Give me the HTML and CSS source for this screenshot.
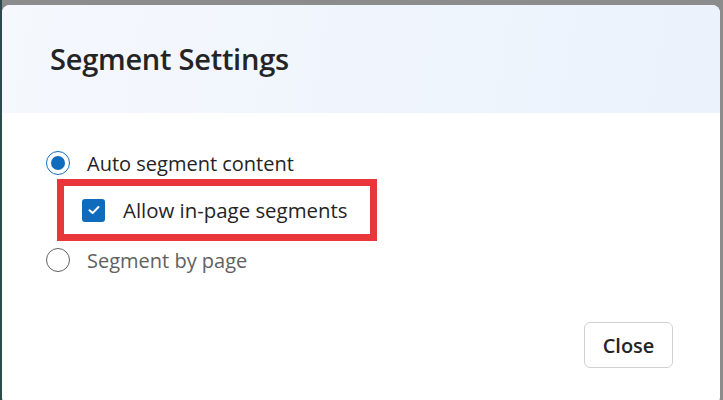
FILE: index.html
```html
<!DOCTYPE html>
<html lang="en">
<head>
    <meta charset="UTF-8">
    <meta name="viewport" content="width=device-width, initial-scale=1.0">
    <title>Segment Settings</title>
    <link rel="stylesheet" href="styles.css">
</head>
<body>
    <div class="backdrop">
        <div class="dialog">
            <div class="dialog-header">
                <h2>Segment Settings</h2>
            </div>

            <div class="dialog-body">
                <label class="option">
                    <span class="radio checked"></span>
                    <span class="option-text">Auto segment content</span>
                </label>

                <!-- highlighted sub option -->
                <div class="highlight">
                    <label class="option sub">
                        <span class="checkbox">
                            <svg width="12" height="10" viewBox="0 0 12 10">
                                <path d="M1.5 5.2 L4.6 8 L10.5 2" fill="none" stroke="#fff" stroke-width="2" stroke-linecap="round" stroke-linejoin="round"/>
                            </svg>
                        </span>
                        <span class="option-text">Allow in-page segments</span>
                    </label>
                </div>

                <label class="option">
                    <span class="radio"></span>
                    <span class="option-text muted">Segment by page</span>
                </label>
            </div>

            <div class="dialog-footer">
                <button class="btn">Close</button>
            </div>
        </div>
    </div>
</body>
</html>
```

FILE: styles.css
```css
:root {
    --accent: #0f6cbd;
    --text: #242424;
    --muted: #616161;
    --mark: #e8363a;
}

body {
    margin: 0;
    font-family: 'Open Sans', 'Noto Sans', sans-serif;
    color: var(--text);
    background: #8c8c8c;
    overflow: hidden;
}

.backdrop {
    height: 400px;
    padding: 5px 3px 0 2px;
    box-sizing: border-box;
    background: linear-gradient(to right, #2d4a4f 0, #2d4a4f 2px, #8c8c8c 2px);
}

.dialog {
    height: 400px;
    background: #fff;
    border-radius: 8px;
    overflow: hidden;
}

.dialog-header {
    height: 108px;
    padding-left: 48px;
    display: flex;
    align-items: center;
    background: linear-gradient(100deg, #f5f8fd 0%, #ebf2fc 100%);
}

.dialog-header h2 {
    margin: 0 0 2px;
    font-size: 29px;
    font-weight: 600;
    letter-spacing: -0.25px;
}

.dialog-body {
    padding: 37px 0 0 44px;
    display: flex;
    flex-direction: column;
    align-items: flex-start;
}

.option {
    display: flex;
    align-items: center;
    height: 26px;
    cursor: pointer;
}

.option-text {
    font-size: 20px;
    margin-left: 17px;
}

.option-text.muted {
    color: var(--muted);
}

.radio {
    width: 22px;
    height: 22px;
    border: 1px solid #616161;
    border-radius: 50%;
    position: relative;
}

.radio.checked {
    border-color: var(--accent);
}

.radio.checked::after {
    content: "";
    position: absolute;
    top: 4px;
    left: 4px;
    width: 14px;
    height: 14px;
    border-radius: 50%;
    background: var(--accent);
}

.highlight {
    margin: 3px 0 6px 11px;
    width: 306px;
    height: 48px;
    border: 7px solid var(--mark);
    display: flex;
    align-items: center;
}

.option.sub {
    padding-left: 18px;
}

.option.sub .option-text {
    margin-left: 18px;
    font-size: 20.4px;
}

.checkbox {
    width: 23px;
    height: 23px;
    border-radius: 3px;
    background: var(--accent);
    display: flex;
    align-items: center;
    justify-content: center;
}

.dialog-footer {
    display: flex;
    justify-content: flex-end;
    padding: 49px 47px 0 0;
}

.btn {
    width: 89px;
    height: 46px;
    font-family: inherit;
    font-size: 20px;
    font-weight: 600;
    color: var(--text);
    background: #fff;
    border: 1px solid #d1d1d1;
    border-radius: 6px;
}
```
